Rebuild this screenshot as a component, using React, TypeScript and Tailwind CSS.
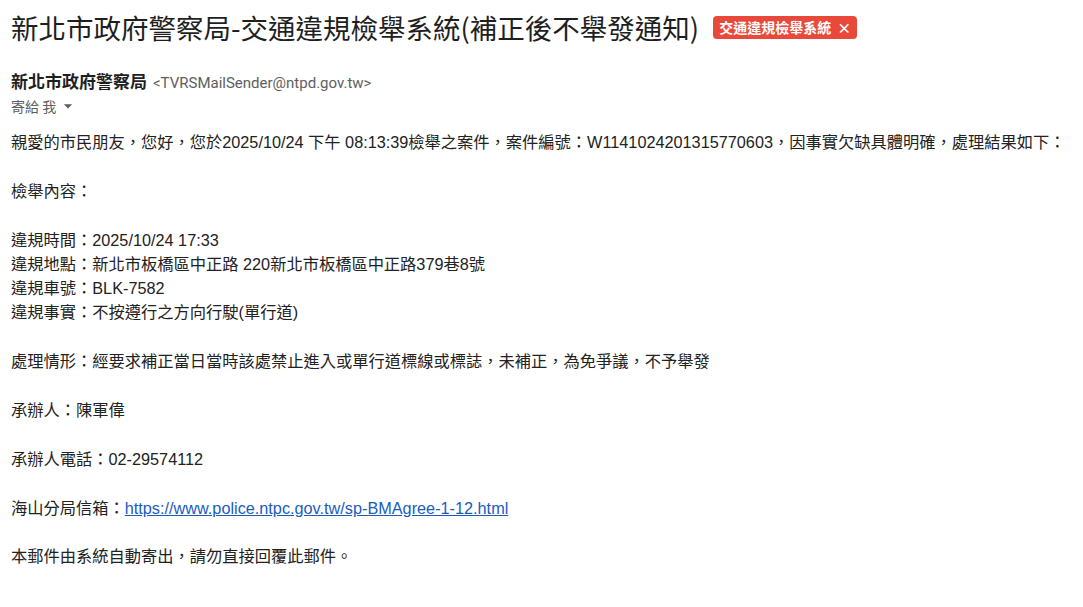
import React from 'react';

const cjk = { fontFamily: '"Liberation Sans", "Noto Sans CJK TC", sans-serif' };

export default function App() {
  return (
    <div className="bg-white min-h-screen px-[11px] pt-[10px] text-[#222]" style={cjk}>
      {/* Subject */}
      <div className="flex items-center gap-[14px] h-[34px]">
        <h1 className="text-[27.5px] leading-[34px] font-normal text-[#1f1f1f]" style={{ fontFamily: '"Noto Sans CJK TC", sans-serif' }}>
          新北市政府警察局-交通違規檢舉系統(補正後不舉發通知)
        </h1>
        <span className="flex items-center gap-[6px] h-[23px] px-[6px] rounded-[4px] bg-[#e9493a] text-white text-[14px] font-bold" style={{ fontFamily: '"Noto Sans CJK TC", sans-serif' }}>
          交通違規檢舉系統
          <span className="text-[14px] leading-none">×</span>
        </span>
      </div>

      {/* Sender */}
      <div className="mt-[24px] flex items-baseline gap-[6px]">
        <span className="text-[17px] font-bold text-[#1f1f1f]" style={{ fontFamily: '"Noto Sans CJK TC", sans-serif' }}>
          新北市政府警察局
        </span>
        <span className="text-[15px] text-[#5e5e5e]" style={{ fontFamily: 'Roboto, "Noto Sans CJK TC", sans-serif' }}>
          &lt;TVRSMailSender@ntpd.gov.tw&gt;
        </span>
      </div>
      <div className="flex items-center gap-[2px] text-[14px] text-[#5e5e5e] h-[23px]" style={{ fontFamily: '"Noto Sans CJK TC", sans-serif' }}>
        <span>寄給 我</span>
        <svg width="20" height="20" viewBox="0 0 24 24">
          <path d="M7 10l5 5 5-5z" fill="#5e5e5e" />
        </svg>
      </div>

      {/* Body */}
      <div className="mt-[12px] text-[16.25px] leading-[24px]">
        <div>親愛的市民朋友，您好，您於2025/10/24 下午 08:13:39檢舉之案件，案件編號：W1141024201315770603，因事實欠缺具體明確，處理結果如下：</div>
        <div className="mt-[25px]">檢舉內容：</div>
        <div className="mt-[25px]">
          <div>違規時間：2025/10/24 17:33</div>
          <div>違規地點：新北市板橋區中正路 220新北市板橋區中正路379巷8號</div>
          <div>違規車號：BLK-7582</div>
          <div>違規事實：不按遵行之方向行駛(單行道)</div>
        </div>
        <div className="mt-[25px]">處理情形：經要求補正當日當時該處禁止進入或單行道標線或標誌，未補正，為免爭議，不予舉發</div>
        <div className="mt-[25px]">承辦人：陳軍偉</div>
        <div className="mt-[25px]">承辦人電話：02-29574112</div>
        <div className="mt-[25px]">
          海山分局信箱：
          <a href="#" className="text-[#1a5bbf] underline">https://www.police.ntpc.gov.tw/sp-BMAgree-1-12.html</a>
        </div>
        <div className="mt-[24px]">本郵件由系統自動寄出，請勿直接回覆此郵件。</div>
      </div>
    </div>
  );
}
